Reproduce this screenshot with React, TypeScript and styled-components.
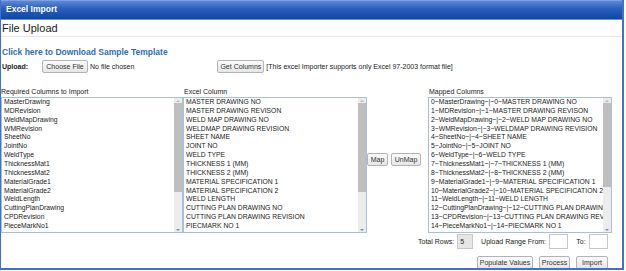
import React from "react";
import styled, { createGlobalStyle } from "styled-components";

const requiredColumns = [
  "MasterDrawing",
  "MDRevision",
  "WeldMapDrawing",
  "WMRevision",
  "SheetNo",
  "JointNo",
  "WeldType",
  "ThicknessMat1",
  "ThicknessMat2",
  "MaterialGrade1",
  "MaterialGrade2",
  "WeldLength",
  "CuttingPlanDrawing",
  "CPDRevision",
  "PieceMarkNo1",
];

const excelColumns = [
  "MASTER DRAWING NO",
  "MASTER DRAWING REVISON",
  "WELD MAP DRAWING NO",
  "WELDMAP DRAWING REVISION",
  "SHEET NAME",
  "JOINT NO",
  "WELD TYPE",
  "THICKNESS 1 (MM)",
  "THICKNESS 2 (MM)",
  "MATERIAL SPECIFICATION 1",
  "MATERIAL SPECIFICATION 2",
  "WELD LENGTH",
  "CUTTING PLAN DRAWING NO",
  "CUTTING PLAN DRAWING REVISION",
  "PIECMARK NO 1",
];

const mappedColumns = requiredColumns.map(
  (name, i) => `${i}~${name}~|~${i}~${excelColumns[i]}`
);

const GlobalStyle = createGlobalStyle`
  body {
    margin: 0;
    background: #fff;
    font-family: "Liberation Sans", Arial, sans-serif;
    color: #222;
  }
`;

interface ListProps {
  items: string[];
  thumb: number;
}

const List = ({ items, thumb }: ListProps) => (
  <ListBox>
    <ListItems>
      {items.map((item) => (
        <ListItem key={item}>{item}</ListItem>
      ))}
    </ListItems>
    <ScrollBar>
      <ScrollArrow />
      <ScrollThumb $size={thumb} />
      <ScrollTrack />
      <ScrollArrow $down />
    </ScrollBar>
  </ListBox>
);

export default function App() {
  return (
    <>
      <GlobalStyle />
      <Dialog>
        <Header>Excel Import</Header>
        <PageTitle>File Upload</PageTitle>
        <TemplateLink href="#">Click here to Download Sample Template</TemplateLink>
        <UploadRow>
          <UploadLabel>Upload:</UploadLabel>
          <Button $w={46}>Choose File</Button>
          <Hint>No file chosen</Hint>
          <Button $w={47} $ml={83}>
            Get Columns
          </Button>
          <Hint>[This excel Importer supports only Excel 97-2003 format file]</Hint>
        </UploadRow>

        <MappingArea>
          <Column $w={182}>
            <ColumnLabel>Required Columns to Import</ColumnLabel>
            <List items={requiredColumns} thumb={89} />
          </Column>
          <Column $w={184}>
            <ColumnLabel $pl={1}>Excel Column</ColumnLabel>
            <List items={excelColumns} thumb={89} />
          </Column>
          <MapButtons>
            <Button $w={21}>Map</Button>
            <Button $w={30}>UnMap</Button>
          </MapButtons>
          <Column $w={184}>
            <ColumnLabel $pl={1}>Mapped Columns</ColumnLabel>
            <List items={mappedColumns} thumb={84} />
            <StatsRow>
              <StatLabel>Total Rows:</StatLabel>
              <StatInput $w={18} $readOnly>
                5
              </StatInput>
              <StatLabel>Upload Range From:</StatLabel>
              <StatInput $w={22} />
              <StatLabel>To:</StatLabel>
              <StatInput $w={22} />
            </StatsRow>
            <ActionRow>
              <Button $w={56}>Populate Values</Button>
              <Button $w={31}>Process</Button>
              <Button $w={32}>Import</Button>
            </ActionRow>
          </Column>
        </MappingArea>
      </Dialog>
    </>
  );
}

const Dialog = styled.div`
  box-sizing: border-box;
  width: 624px;
  height: 270px;
  border-left: 1px solid #3f72c8;
  border-right: 2px solid #3f72c8;
  border-bottom: 2px solid #3f72c8;
  display: flex;
  flex-direction: column;
  overflow: hidden;
`;

const Header = styled.div`
  height: 19px;
  line-height: 19px;
  padding-left: 5px;
  color: #fff;
  font-weight: bold;
  font-size: 8.5px;
  background: linear-gradient(#9db8e8 0, #5d88d4 1px, #2a5fbd 45%, #0f46a5 100%);
  border-bottom: 1px solid #6d93d8;
`;

const PageTitle = styled.div`
  height: 16px;
  line-height: 16px;
  font-size: 11px;
  padding-left: 1px;
  color: #222;
  border-bottom: 1px solid #e8e8e8;
`;

const TemplateLink = styled.a`
  margin-top: 10px;
  padding-left: 1px;
  font-size: 8.5px;
  line-height: 10px;
  font-weight: bold;
  color: #2f6db6;
  text-decoration: none;
`;

const UploadRow = styled.div`
  display: flex;
  align-items: center;
  height: 13px;
  margin-top: 3px;
  padding-left: 1px;
`;

const UploadLabel = styled.span`
  width: 40px;
  font-size: 7px;
  font-weight: bold;
`;

const Hint = styled.span`
  font-size: 7px;
  margin-left: 2px;
  white-space: nowrap;
`;

const Button = styled.button<{ $w: number; $ml?: number }>`
  box-sizing: border-box;
  width: ${({ $w }) => $w}px;
  height: 13px;
  margin: 0 0 0 ${({ $ml }) => $ml ?? 0}px;
  padding: 0;
  font-family: inherit;
  font-size: 7px;
  color: #333;
  white-space: nowrap;
  border: 1px solid #b4b4b4;
  border-radius: 2px;
  background: linear-gradient(#fbfbfb, #e6e6e6);
`;

const MappingArea = styled.div`
  display: flex;
  align-items: flex-start;
  margin-top: 14px;
`;

const Column = styled.div<{ $w: number }>`
  width: ${({ $w }) => $w}px;
  display: flex;
  flex-direction: column;
`;

const ColumnLabel = styled.div<{ $pl?: number }>`
  font-size: 7px;
  line-height: 9px;
  height: 10px;
  padding-left: ${({ $pl }) => $pl ?? 0}px;
  white-space: nowrap;
`;

const ListBox = styled.div`
  box-sizing: border-box;
  height: 136px;
  display: flex;
  border: 1px solid #a9bfdc;
  background: #fff;
`;

const ListItems = styled.div`
  flex: 1;
  overflow: hidden;
  padding: 0 2px;
`;

const ListItem = styled.div`
  font-size: 6.8px;
  line-height: 8.86px;
  white-space: nowrap;
  color: #222;
`;

const ScrollBar = styled.div`
  width: 8px;
  display: flex;
  flex-direction: column;
  background: #ececec;
`;

const ScrollArrow = styled.div<{ $down?: boolean }>`
  height: 5px;
  display: flex;
  align-items: center;
  justify-content: center;
  &::after {
    content: "";
    border-left: 2px solid transparent;
    border-right: 2px solid transparent;
    ${({ $down }) =>
      $down ? "border-top: 2px solid #8a8a8a;" : "border-bottom: 2px solid #bbb;"}
  }
`;

const ScrollThumb = styled.div<{ $size: number }>`
  height: ${({ $size }) => $size}px;
  background: #bfbfbf;
`;

const ScrollTrack = styled.div`
  flex: 1;
`;

const MapButtons = styled.div`
  width: 61px;
  display: flex;
  gap: 3px;
  padding-top: 66px;
`;

const StatsRow = styled.div`
  display: flex;
  align-items: center;
  justify-content: flex-end;
  height: 15px;
  margin: 1px 4px 0 -10px;
`;

const StatLabel = styled.span`
  font-size: 7px;
  white-space: nowrap;
  margin: 0 3px 0 8px;
  &:first-child {
    margin-left: 0;
  }
`;

const StatInput = styled.div<{ $w: number; $readOnly?: boolean }>`
  box-sizing: border-box;
  width: ${({ $w }) => $w}px;
  height: 15px;
  padding-left: 2px;
  font-size: 7px;
  line-height: 13px;
  border: 1px solid #c8c8c8;
  background: ${({ $readOnly }) => ($readOnly ? "#e6e6e6" : "#fff")};
`;

const ActionRow = styled.div`
  display: flex;
  justify-content: flex-end;
  gap: 6px;
  margin: 7px 4px 0 0;
`;
